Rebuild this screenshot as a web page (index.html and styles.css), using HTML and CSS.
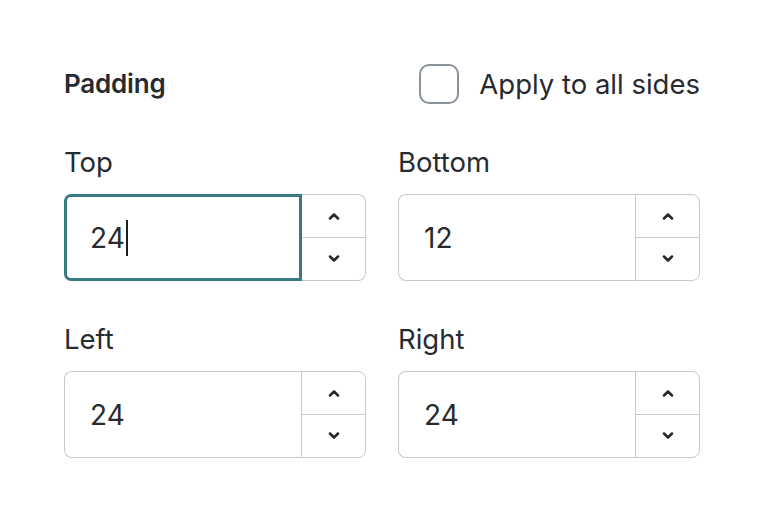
FILE: index.html
```html
<!DOCTYPE html>
<html lang="en">
<head>
  <meta charset="UTF-8" />
  <meta name="viewport" content="width=device-width, initial-scale=1.0"/>
  <title>Padding</title>
  <link rel="stylesheet" href="styles.css">
</head>
<body>

  <div class="panel">
    <div class="panel-head">
      <h2>Padding</h2>
      <label class="check">
        <span class="check-box"></span>
        <span>Apply to all sides</span>
      </label>
    </div>

    <div class="fields">
      <div class="field">
        <label>Top</label>
        <div class="spin is-focused">
          <div class="spin-input"><span>24</span><span class="caret"></span></div>
          <div class="stepper">
            <button type="button" class="step-btn">
              <svg width="12" height="8" viewBox="0 0 12 8"><polyline points="2,6.5 6,2.5 10,6.5" /></svg>
            </button>
            <button type="button" class="step-btn">
              <svg width="12" height="8" viewBox="0 0 12 8"><polyline points="2,1.5 6,5.5 10,1.5" /></svg>
            </button>
          </div>
        </div>
      </div>

      <div class="field">
        <label>Bottom</label>
        <div class="spin">
          <div class="spin-input"><span>12</span></div>
          <div class="stepper">
            <button type="button" class="step-btn">
              <svg width="12" height="8" viewBox="0 0 12 8"><polyline points="2,6.5 6,2.5 10,6.5" /></svg>
            </button>
            <button type="button" class="step-btn">
              <svg width="12" height="8" viewBox="0 0 12 8"><polyline points="2,1.5 6,5.5 10,1.5" /></svg>
            </button>
          </div>
        </div>
      </div>

      <div class="field">
        <label>Left</label>
        <div class="spin">
          <div class="spin-input"><span>24</span></div>
          <div class="stepper">
            <button type="button" class="step-btn">
              <svg width="12" height="8" viewBox="0 0 12 8"><polyline points="2,6.5 6,2.5 10,6.5" /></svg>
            </button>
            <button type="button" class="step-btn">
              <svg width="12" height="8" viewBox="0 0 12 8"><polyline points="2,1.5 6,5.5 10,1.5" /></svg>
            </button>
          </div>
        </div>
      </div>

      <div class="field">
        <label>Right</label>
        <div class="spin">
          <div class="spin-input"><span>24</span></div>
          <div class="stepper">
            <button type="button" class="step-btn">
              <svg width="12" height="8" viewBox="0 0 12 8"><polyline points="2,6.5 6,2.5 10,6.5" /></svg>
            </button>
            <button type="button" class="step-btn">
              <svg width="12" height="8" viewBox="0 0 12 8"><polyline points="2,1.5 6,5.5 10,1.5" /></svg>
            </button>
          </div>
        </div>
      </div>
    </div>
  </div>

</body>
</html>
```

FILE: styles.css
```css
body {
  margin: 0;
  font-family: 'Inter', 'Noto Sans', sans-serif;
  color: #272b30;
  background: white;
}

.panel {
  padding: 64px;
}

.panel-head {
  display: flex;
  justify-content: space-between;
  align-items: center;
  height: 40px;
}

.panel-head h2 {
  margin: 0;
  font-size: 26px;
  line-height: 32px;
  font-weight: 600;
  letter-spacing: -0.2px;
}

.check {
  display: flex;
  align-items: center;
  gap: 20px;
  font-size: 27.5px;
  line-height: 32px;
}

.check-box {
  box-sizing: border-box;
  width: 40px;
  height: 40px;
  border: 2px solid #8a939b;
  border-radius: 10px;
}

.fields {
  display: grid;
  grid-template-columns: 1fr 1fr;
  column-gap: 32px;
  row-gap: 42px;
  margin-top: 42px;
}

.field label {
  display: block;
  font-size: 27.5px;
  line-height: 32px;
  margin-bottom: 16px;
}

.spin {
  display: flex;
  height: 87px;
}

.spin-input {
  flex: 1;
  display: flex;
  align-items: center;
  padding-left: 25px;
  border: 1px solid #c2cbd3;
  border-right: none;
  border-radius: 8px 0 0 8px;
  font-size: 28px;
}

.stepper {
  flex: 0 0 65px;
  box-sizing: border-box;
  display: flex;
  flex-direction: column;
  border: 1px solid #c2cbd3;
  border-radius: 0 8px 8px 0;
}

.step-btn {
  flex: 1;
  display: flex;
  align-items: center;
  justify-content: center;
  padding: 0;
  border: none;
  background: none;
  cursor: pointer;
}

.step-btn + .step-btn {
  border-top: 1px solid #c2cbd3;
}

.step-btn svg polyline {
  fill: none;
  stroke: #24282c;
  stroke-width: 2.5;
  stroke-linecap: round;
  stroke-linejoin: round;
}

.is-focused .spin-input {
  border: 3px solid #377a83;
  border-radius: 7px 0 0 7px;
  padding-left: 23px;
}

.is-focused .stepper {
  flex-basis: 64px;
  border-left: none;
}

.caret {
  width: 2px;
  height: 36px;
  margin-left: 1px;
  background: #1c1f22;
}
```
